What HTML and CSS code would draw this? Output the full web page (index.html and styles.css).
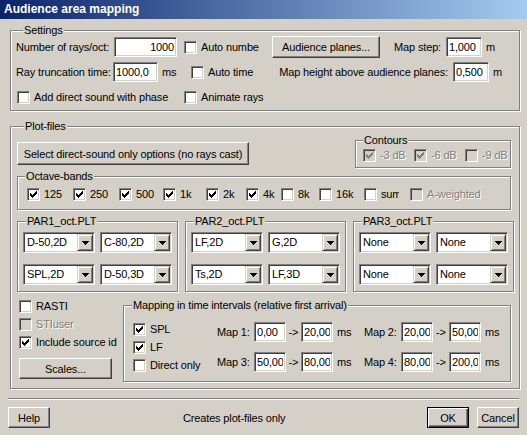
FILE: index.html
```html
<!DOCTYPE html>
<html lang="en">
<head>
  <meta charset="UTF-8">
  <title>Audience area mapping</title>
  <link rel="stylesheet" href="styles.css">
</head>
<body>
  <svg class="defs" width="0" height="0">
    <symbol id="tick" viewBox="0 0 7 7"><path d="M6 0h1v1h-1z M5 1h2v1h-2z M0 2h1v1h-1z M4 2h3v1h-3z M0 3h2v1h-2z M3 3h3v1h-3z M0 4h5v1h-5z M1 5h3v1h-3z M2 6h1v1h-1z"/></symbol>
    <symbol id="arrow" viewBox="0 0 7 4"><path d="M0 0h7v1h-7z M1 1h5v1h-5z M2 2h3v1h-3z M3 3h1v1h-1z"/></symbol>
  </svg>

  <div class="titlebar">Audience area mapping</div>

  <div class="dialog">
    <!-- Settings -->
    <div class="group settings">
      <div class="group-title">Settings</div>
      <div class="row">
        <span class="lbl lbl-rays">Number of rays/oct:</span>
        <input class="edit edit-rays" type="text" value="1000">
        <label class="chk chk-auto"><span class="box"></span><span class="clip clip-auto">Auto number</span></label>
        <button class="btn btn-planes">Audience planes...</button>
        <span class="lbl lbl-step">Map step:</span>
        <input class="edit edit-m" type="text" value="1,000">
        <span class="unit">m</span>
      </div>
      <div class="row">
        <span class="lbl lbl-trunc">Ray truncation time:</span>
        <input class="edit edit-trunc" type="text" value="1000,0">
        <span class="unit unit-ms">ms</span>
        <label class="chk chk-auto"><span class="box"></span>Auto time</label>
        <span class="lbl lbl-height">Map height above audience planes:</span>
        <input class="edit edit-m" type="text" value="0,500">
        <span class="unit">m</span>
      </div>
      <div class="row">
        <label class="chk chk-direct"><span class="box"></span>Add direct sound with phase</label>
        <label class="chk"><span class="box"></span>Animate rays</label>
      </div>
    </div>

    <!-- Plot-files -->
    <div class="group plot">
      <div class="group-title">Plot-files</div>

      <div class="plot-top">
        <button class="btn btn-direct">Select direct-sound only options (no rays cast)</button>
        <div class="group contours">
          <div class="group-title">Contours</div>
          <div class="contour-list">
            <label class="chk off"><span class="box"><svg><use href="#tick"/></svg></span><span class="dis">-3 dB</span></label>
            <label class="chk off"><span class="box"><svg><use href="#tick"/></svg></span><span class="dis">-6 dB</span></label>
            <label class="chk off"><span class="box"></span><span class="dis">-9 dB</span></label>
          </div>
        </div>
      </div>

      <div class="group bands">
        <div class="group-title">Octave-bands</div>
        <div class="band-list">
          <label class="chk"><span class="box"><svg><use href="#tick"/></svg></span>125</label>
          <label class="chk"><span class="box"><svg><use href="#tick"/></svg></span>250</label>
          <label class="chk"><span class="box"><svg><use href="#tick"/></svg></span>500</label>
          <label class="chk"><span class="box"><svg><use href="#tick"/></svg></span>1k</label>
          <label class="chk"><span class="box"><svg><use href="#tick"/></svg></span>2k</label>
          <label class="chk"><span class="box"><svg><use href="#tick"/></svg></span>4k</label>
          <label class="chk"><span class="box"></span>8k</label>
          <label class="chk"><span class="box"></span>16k</label>
          <label class="chk"><span class="box"></span><span class="clip clip-sum">sum</span></label>
          <label class="chk off"><span class="box"></span><span class="dis">A-weighted</span></label>
        </div>
      </div>

      <div class="par-row">
        <div class="group par">
          <div class="group-title">PAR1_oct.PLT</div>
          <div class="combo-grid">
            <div class="combo"><span class="combo-text">D-50,2D</span><span class="drop"><svg><use href="#arrow"/></svg></span></div>
            <div class="combo"><span class="combo-text">C-80,2D</span><span class="drop"><svg><use href="#arrow"/></svg></span></div>
            <div class="combo"><span class="combo-text">SPL,2D</span><span class="drop"><svg><use href="#arrow"/></svg></span></div>
            <div class="combo"><span class="combo-text">D-50,3D</span><span class="drop"><svg><use href="#arrow"/></svg></span></div>
          </div>
        </div>
        <div class="group par">
          <div class="group-title">PAR2_oct.PLT</div>
          <div class="combo-grid">
            <div class="combo"><span class="combo-text">LF,2D</span><span class="drop"><svg><use href="#arrow"/></svg></span></div>
            <div class="combo"><span class="combo-text">G,2D</span><span class="drop"><svg><use href="#arrow"/></svg></span></div>
            <div class="combo"><span class="combo-text">Ts,2D</span><span class="drop"><svg><use href="#arrow"/></svg></span></div>
            <div class="combo"><span class="combo-text">LF,3D</span><span class="drop"><svg><use href="#arrow"/></svg></span></div>
          </div>
        </div>
        <div class="group par">
          <div class="group-title">PAR3_oct.PLT</div>
          <div class="combo-grid">
            <div class="combo"><span class="combo-text">None</span><span class="drop"><svg><use href="#arrow"/></svg></span></div>
            <div class="combo"><span class="combo-text">None</span><span class="drop"><svg><use href="#arrow"/></svg></span></div>
            <div class="combo"><span class="combo-text">None</span><span class="drop"><svg><use href="#arrow"/></svg></span></div>
            <div class="combo"><span class="combo-text">None</span><span class="drop"><svg><use href="#arrow"/></svg></span></div>
          </div>
        </div>
      </div>

      <div class="plot-bottom">
        <div class="extras">
          <label class="chk line"><span class="box"></span>RASTI</label>
          <label class="chk line off"><span class="box"></span><span class="dis">STIuser</span></label>
          <label class="chk line"><span class="box"><svg><use href="#tick"/></svg></span>Include source id</label>
          <button class="btn btn-scales">Scales...</button>
        </div>
        <div class="group mapping">
          <div class="group-title">Mapping in time intervals (relative first arrival)</div>
          <div class="mapping-body">
            <div class="map-checks">
              <label class="chk line"><span class="box"><svg><use href="#tick"/></svg></span>SPL</label>
              <label class="chk line"><span class="box"><svg><use href="#tick"/></svg></span>LF</label>
              <label class="chk line"><span class="box"></span>Direct only</label>
            </div>
            <div class="map-grid">
              <span>Map 1:</span>
              <input class="edit" type="text" value="0,00">
              <span class="to">-&gt;</span>
              <input class="edit" type="text" value="20,00">
              <span class="ms">ms</span>
              <span>Map 2:</span>
              <input class="edit" type="text" value="20,00">
              <span class="to">-&gt;</span>
              <input class="edit" type="text" value="50,00">
              <span class="ms">ms</span>

              <span>Map 3:</span>
              <input class="edit" type="text" value="50,00">
              <span class="to">-&gt;</span>
              <input class="edit" type="text" value="80,00">
              <span class="ms">ms</span>
              <span>Map 4:</span>
              <input class="edit" type="text" value="80,00">
              <span class="to">-&gt;</span>
              <input class="edit" type="text" value="200,0">
              <span class="ms">ms</span>
            </div>
          </div>
        </div>
      </div>
    </div>

    <div class="separator"></div>

    <div class="footer">
      <button class="btn btn-small">Help</button>
      <span class="status">Creates plot-files only</span>
      <button class="btn btn-small btn-default">OK</button>
      <button class="btn btn-small">Cancel</button>
    </div>
  </div>
</body>
</html>
```

FILE: styles.css
```css
/* Classic dialog look */
html, body {
  margin: 0;
  background: #d4d0c8;
}
body {
  width: 527px;
  height: 435px;
  overflow: hidden;
  font-family: "Liberation Sans", Arial, sans-serif;
  font-size: 11px;
  letter-spacing: -0.15px;
  color: #000;
}
.defs {
  position: absolute;
}

/* Title bar */
.titlebar {
  height: 19px;
  line-height: 19px;
  padding-left: 4px;
  background: linear-gradient(90deg, #0a246a, #a6caf0);
  color: #fff;
  font-weight: bold;
  font-size: 12px;
  letter-spacing: 0;
}

.dialog {
  padding: 0 8px;
}

/* Group boxes (etched); --pt is the space under the title line */
.group {
  --pt: 5px;
  padding-top: var(--pt);
  border: 1px solid #808080;
  box-shadow: inset 1px 1px 0 #fff, 1px 1px 0 #fff;
}
.group-title {
  display: block;
  width: max-content;
  height: 13px;
  line-height: 13px;
  margin: calc(-7px - var(--pt)) 0 calc(var(--pt) - 6px) 7px;
  padding: 0 1px;
  background: #d4d0c8;
}

/* Common controls */
.row {
  display: flex;
  align-items: center;
  height: 22px;
}
.lbl, .unit {
  white-space: nowrap;
}
.unit {
  padding-left: 4px;
}
.chk {
  display: flex;
  align-items: center;
  gap: 4px;
  white-space: nowrap;
}
.box {
  width: 13px;
  height: 13px;
  box-sizing: border-box;
  flex: none;
  display: flex;
  align-items: center;
  justify-content: center;
  background: #fff;
  border: 1px solid;
  border-color: #808080 #fff #fff #808080;
  box-shadow: inset 1px 1px 0 #404040, inset -1px -1px 0 #d4d0c8;
}
.box svg {
  width: 7px;
  height: 7px;
  fill: #000;
  shape-rendering: crispEdges;
}
.chk.off .box {
  background: #d4d0c8;
}
.chk.off .box svg {
  fill: #808080;
}
.dis {
  color: #808080;
  text-shadow: 1px 1px 0 #fff;
}
.clip {
  overflow: hidden;
}
.clip-auto {
  width: 58px;
}
.clip-sum {
  width: 18px;
}

.edit {
  height: 20px;
  box-sizing: border-box;
  margin: 0;
  padding: 0 2px;
  font: inherit;
  letter-spacing: inherit;
  color: #000;
  background: #fff;
  border: 1px solid;
  border-color: #808080 #fff #fff #808080;
  box-shadow: inset 1px 1px 0 #404040, inset -1px -1px 0 #d4d0c8;
  outline: none;
}

.btn {
  box-sizing: border-box;
  margin: 0;
  padding: 0;
  font: inherit;
  letter-spacing: inherit;
  color: #000;
  background: #d4d0c8;
  border: 1px solid;
  border-color: #fff #404040 #404040 #fff;
  box-shadow: inset -1px -1px 0 #808080;
  white-space: nowrap;
}
.btn-default {
  border: 1px solid #000;
  box-shadow: inset 1px 1px 0 #fff, inset -1px -1px 0 #404040, inset -2px -2px 0 #808080;
}

/* Settings */
.settings {
  width: 510px;
  box-sizing: border-box;
  margin: 11px 0 0 2px;
  padding-bottom: 2px;
  padding-left: 5px;
}
.settings .row + .row {
  margin-top: 3px;
}
.lbl-rays { width: 98px; }
.edit-rays { width: 63px; text-align: right; }
.chk-auto { width: 88px; margin-left: 7px; }
.btn-planes { width: 108px; height: 22px; }
.lbl-step { width: 66px; text-align: right; padding-right: 5px; box-sizing: border-box; }
.edit-m { width: 36px; }
.lbl-trunc { width: 97px; }
.edit-trunc { width: 45px; }
.unit-ms { width: 26px; box-sizing: border-box; }
.lbl-height { width: 174px; text-align: right; padding-right: 5px; box-sizing: border-box; }
.chk-direct { width: 167px; margin-left: 1px; }

/* Plot-files */
.plot {
  --pt: 13px;
  width: 510px;
  box-sizing: border-box;
  margin: 15px 0 0 2px;
  padding-right: 8px;
  padding-bottom: 6px;
  padding-left: 6px;
}
.plot-top {
  display: flex;
  justify-content: space-between;
  align-items: flex-start;
}
.btn-direct {
  width: 232px;
  height: 23px;
  margin-top: 2px;
}
.contours {
  --pt: 5px;
  width: 156px;
  box-sizing: border-box;
  padding-bottom: 3px;
  padding-left: 7px;
}
.contours .group-title {
  margin-left: 0;
}
.contour-list {
  display: grid;
  grid-template-columns: 51px 51px auto;
  height: 18px;
  align-items: center;
}

.bands {
  --pt: 8px;
  margin-top: 8px;
  padding-bottom: 6px;
  padding-left: 9px;
}
.bands .group-title {
  margin-left: -2px;
}
.band-list {
  display: grid;
  grid-template-columns: 46px 46px 44px 43px 40px 35px 38px 45px 46px auto;
  height: 18px;
  align-items: center;
}

.par-row {
  display: flex;
  gap: 7px;
  margin-top: 11px;
}
.par {
  --pt: 10px;
  flex: 1;
  padding-right: 5px;
  padding-bottom: 6px;
  padding-left: 5px;
}
.par .group-title {
  margin-left: 3px;
}
.combo-grid {
  display: grid;
  grid-template-columns: 72px 72px;
  column-gap: 5px;
  row-gap: 11px;
}
.combo {
  display: flex;
  height: 21px;
  box-sizing: border-box;
  background: #fff;
  border: 1px solid;
  border-color: #808080 #fff #fff #808080;
  box-shadow: inset 1px 1px 0 #404040, inset -1px -1px 0 #d4d0c8;
  padding: 1px;
}
.combo-text {
  flex: 1;
  padding-left: 2px;
  line-height: 17px;
  white-space: nowrap;
  overflow: hidden;
}
.drop {
  width: 16px;
  height: 17px;
  box-sizing: border-box;
  display: flex;
  align-items: center;
  justify-content: center;
  background: #d4d0c8;
  border: 1px solid;
  border-color: #d4d0c8 #404040 #404040 #d4d0c8;
  box-shadow: inset 1px 1px 0 #fff, inset -1px -1px 0 #808080;
}
.drop svg {
  width: 7px;
  height: 4px;
  fill: #000;
  shape-rendering: crispEdges;
}

.plot-bottom {
  display: flex;
  align-items: flex-start;
  margin-top: 5px;
}
.extras {
  width: 106px;
  flex: none;
  display: flex;
  flex-direction: column;
  align-items: flex-start;
}
.line {
  height: 18px;
  margin-left: 2px;
}
.btn-scales {
  width: 93px;
  height: 21px;
  margin: 7px 0 0 2px;
}
.mapping {
  --pt: 14px;
  flex: 1;
  margin-top: 8px;
  padding-bottom: 7px;
  padding-left: 9px;
}
.mapping .group-title {
  margin-left: -1px;
}
.mapping-body {
  display: flex;
}
.map-checks {
  width: 84px;
  display: flex;
  flex-direction: column;
}
.map-checks .line {
  margin-left: 0;
}
.map-grid {
  display: grid;
  grid-template-columns: 37px 32px 15px 32px 31px 37px 32px 16px 32px auto;
  grid-auto-rows: 20px;
  row-gap: 10px;
  align-items: center;
  margin-top: 2px;
}
.map-grid .edit {
  width: 32px;
}
.map-grid .to {
  text-align: center;
}
.map-grid .ms {
  padding-left: 4px;
}

/* Footer */
.separator {
  margin-top: 9px;
  border-top: 1px solid #808080;
  border-bottom: 1px solid #fff;
}
.footer {
  display: flex;
  align-items: center;
  margin-top: 7px;
}
.btn-small {
  width: 42px;
  height: 21px;
}
.status {
  margin-left: 133px;
  margin-right: auto;
}
.footer .btn-default {
  margin-right: 8px;
}
```
